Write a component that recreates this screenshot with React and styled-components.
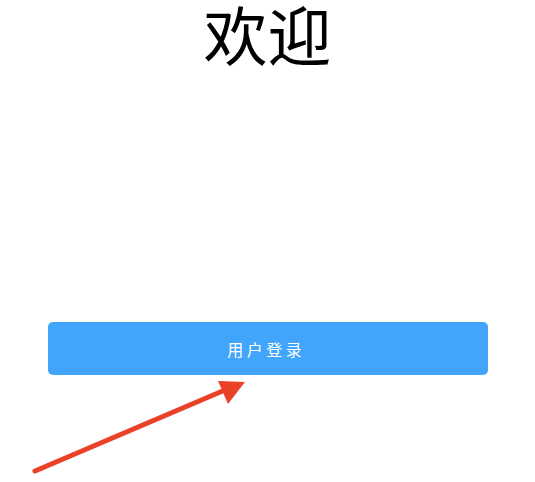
import React from 'react';
import styled, { createGlobalStyle } from 'styled-components';

const GlobalStyle = createGlobalStyle`
  html, body {
    margin: 0;
    padding: 0;
    background: #ffffff;
    font-family: 'Noto Sans CJK SC', 'Noto Sans', sans-serif;
  }
`;

const Page = styled.div`
  position: relative;
  width: 535px;
  height: 482px;
  overflow: hidden;
  display: flex;
  flex-direction: column;
  align-items: center;
`;

const Title = styled.h1`
  margin: 0;
  font-size: 64px;
  font-weight: 400;
  line-height: 1;
  color: #000000;
`;

const LoginButton = styled.button`
  margin-top: 258px;
  width: 440px;
  height: 53px;
  border: none;
  border-radius: 5px;
  background: #40a5fb;
  color: #ffffff;
  font-family: 'Noto Sans CJK SC', sans-serif;
  font-size: 16px;
  letter-spacing: 3.5px;
  padding-left: 3.5px;
  cursor: pointer;
`;

const Arrow = styled.svg`
  position: absolute;
  left: 0;
  top: 0;
  pointer-events: none;
`;

export default function App() {
  return (
    <Page>
      <GlobalStyle />
      <Title>欢迎</Title>
      <LoginButton>用户登录</LoginButton>
      <Arrow width="535" height="482" viewBox="0 0 535 482">
        <line x1="35" y1="471" x2="232" y2="387" stroke="#ea4129" strokeWidth="5" strokeLinecap="round" />
        <polygon points="245,382 218,381 228,404" fill="#ea4129" />
      </Arrow>
    </Page>
  );
}
